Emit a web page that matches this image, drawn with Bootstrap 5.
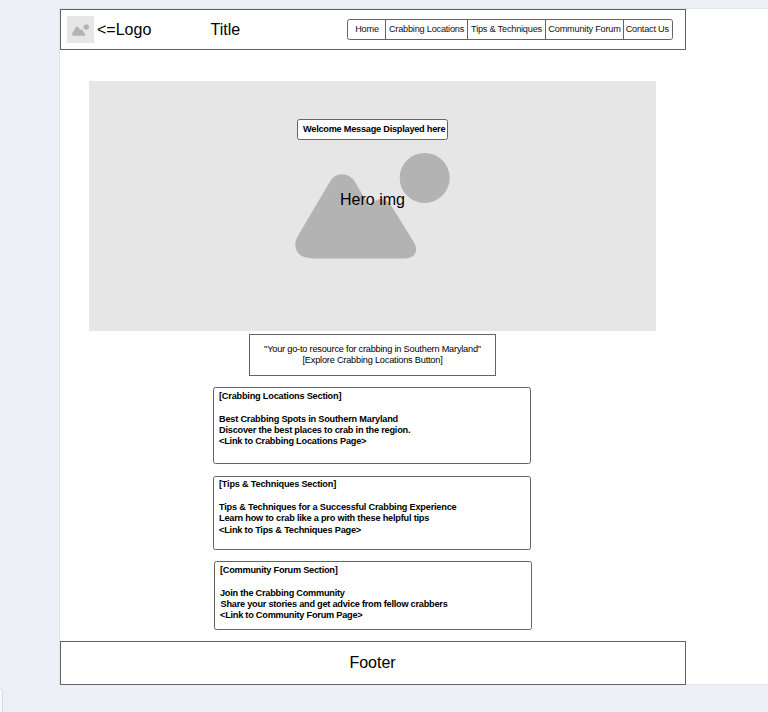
<!DOCTYPE html>
<html lang="en">
<head>
<meta charset="utf-8">
<meta name="viewport" content="width=device-width, initial-scale=1">
<title>Crabbing in Southern Maryland</title>
<link href="https://cdn.jsdelivr.net/npm/bootstrap@5.3.0/dist/css/bootstrap.min.css" rel="stylesheet">
<style>
body{background:#edf0f6;font-family:"Liberation Sans",Arial,sans-serif;color:#000;height:712px;overflow:hidden}
.board{margin:9px 0 0 60px;height:675px;background:#fff;box-shadow:0 0 0 1px #e1e5ea}
.frame{width:626px}
.line-box{border:1px solid #636466;background:#fff}
.soft{border-radius:2.5px}
.topbar{height:41px;padding:0 12px 0 6px}
.logo-box{width:27px;height:27px;background:#e6e6e6}
.big{font-size:16px;line-height:18px;white-space:pre}
.logo-text{width:113.500px;margin-left:3px}
.menu{width:326.500px;height:21px}
.menu a{font-size:9.2px;letter-spacing:-.22px;line-height:19px;color:#111;text-decoration:none;text-align:center;white-space:nowrap;border-left:1px solid #636466;padding-left:1px}
.menu a:first-child{border-left:0;padding-left:2px;width:37px}
.menu .w-a{width:82px}
.menu .w-b{width:78px}
.menu .w-c{flex:1;padding-right:1px;padding-left:0}
.hero{width:567px;height:250px;margin:31px 0 0 29px;background:#e6e6e6}
.welcome{width:151px;height:21px;margin:38px 0 0 208px;font-size:9.2px;letter-spacing:-.24px;line-height:19px;padding-left:5px;white-space:nowrap}
.art{margin:12px 0 0 206px}
.hero-label{left:251px;top:110px}
.quote{width:247px;height:42px;margin:3px 0 0 189px;font-size:9.2px;letter-spacing:-.2px;line-height:11px;padding-top:9px}
.info{width:318px;margin-left:153px;padding:3px 5px}
.info p,.info h2{margin:0;font-size:9.2px;letter-spacing:-.21px;line-height:11px;white-space:pre;font-weight:700}
.info h2{margin-bottom:12px}
.i1{height:77px;margin-top:11px}
.i2{height:74px;margin-top:12px;padding-top:2px}
.i2 p:last-child{margin-top:1px}
.info.i3{height:69px;margin-top:11px;margin-left:154px}
.i3 p,.i3 h2{letter-spacing:-.24px}
.info .nudge{padding-left:.5px}
.foot{height:44px;margin-top:11px;padding-right:1px}
.side-tab{left:-6px;top:687px;width:9px;height:40px;border:1px solid #d9dde3;border-radius:5px;background:#f6f8fa}
</style>
</head>
<body>
<svg class="d-none" xmlns="http://www.w3.org/2000/svg">
  <symbol id="scene" viewBox="295 152.5 155 106.2">
    <circle cx="424.7" cy="178" r="25"/>
    <path d="M299 234L329.5 182.500Q334 174.400 342.300 174.400Q350 174.400 355 182L369 206Q375 199 382 199Q387 199 392 207L413.500 241.700Q417 247 416 251Q414 258.500 405 258.500H314Q295 258.500 295.300 244Q295.500 240 299 234Z"/>
  </symbol>
</svg>
<main class="board">
  <div class="frame">
    <header class="line-box topbar d-flex align-items-center">
      <div class="logo-box d-flex align-items-center justify-content-center"><svg width="17" height="12" fill="#b3b3b3"><use href="#scene"/></svg></div>
      <div class="big logo-text">&lt;=Logo</div>
      <div class="big">Title</div>
      <nav class="menu line-box soft d-flex ms-auto">
        <a href="#">Home</a>
        <a href="#" class="w-a">Crabbing Locations</a>
        <a href="#" class="w-b">Tips &amp; Techniques</a>
        <a href="#" class="w-b">Community Forum</a>
        <a href="#" class="w-c">Contact Us</a>
      </nav>
    </header>
    <section class="hero position-relative d-flex flex-column align-items-start">
      <div class="welcome line-box soft fw-bold">Welcome Message Displayed here</div>
      <svg class="art" width="155" height="107" fill="#b3b3b3"><use href="#scene"/></svg>
      <div class="big hero-label position-absolute">Hero img</div>
    </section>
    <section class="quote line-box text-center">
      <div>"Your go-to resource for crabbing in Southern Maryland"</div>
      <div>[Explore Crabbing Locations Button]</div>
    </section>
    <section class="info i1 line-box soft">
      <h2>[Crabbing Locations Section]</h2>
      <p>Best Crabbing Spots in Southern Maryland</p>
      <p>Discover the best places to crab in the region.</p>
      <p>&lt;Link to Crabbing Locations Page&gt;</p>
    </section>
    <section class="info i2 line-box soft">
      <h2>[Tips &amp; Techniques Section]</h2>
      <p>Tips &amp; Techniques for a Successful Crabbing Experience</p>
      <p>Learn how to crab like a pro with these helpful tips</p>
      <p>&lt;Link to Tips &amp; Techniques Page&gt;</p>
    </section>
    <section class="info i3 line-box soft">
      <h2>[Community Forum Section]</h2>
      <p>Join the Crabbing Community</p>
      <p class="nudge">Share your stories and get advice from fellow crabbers</p>
      <p>&lt;Link to Community Forum Page&gt;</p>
    </section>
    <footer class="foot line-box d-flex align-items-center justify-content-center big">Footer</footer>
  </div>
</main>
<div class="side-tab position-absolute"></div>
<script src="https://cdn.jsdelivr.net/npm/bootstrap@5.3.0/dist/js/bootstrap.bundle.min.js"></script>
</body>
</html>
